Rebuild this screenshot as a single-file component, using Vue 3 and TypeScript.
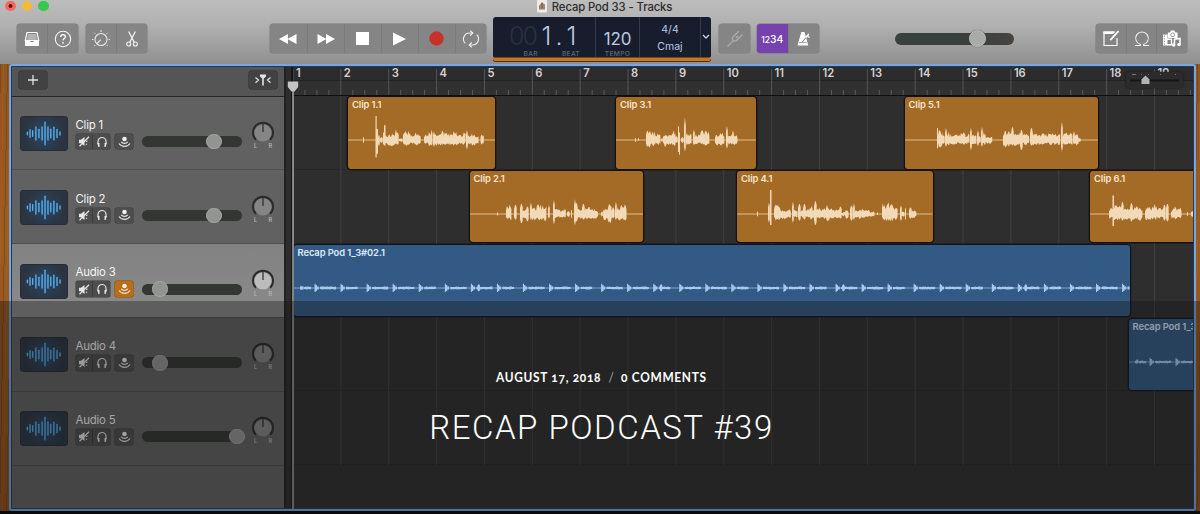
<script setup lang="ts">
interface Track {
  name: string
  volume: number
  selected: boolean
  monitoring: boolean
}

/** [from, to, height above the centre line, height below it], in px from the region's left edge */
type Burst = [number, number, number, number]

interface Region {
  name: string
  lane: number
  start: number
  length: number
  tone: 'amber' | 'blue'
  bursts: Burst[]
}

const BAR = 47.86

const tracks: Track[] = [
  { name: 'Clip 1', volume: 72, selected: false, monitoring: false },
  { name: 'Clip 2', volume: 72, selected: false, monitoring: false },
  { name: 'Audio 3', volume: 18.5, selected: true, monitoring: true },
  { name: 'Audio 4', volume: 18.5, selected: false, monitoring: false },
  { name: 'Audio 5', volume: 95, selected: false, monitoring: false },
]

const iconBars: [number, number][] = [
  [6.4, 1.4], [9.2, 4], [12, 3], [15.4, 7], [18.6, 4.4], [22, 7],
  [25.1, 12], [28.2, 7], [31.2, 4.6], [34.5, 6.6], [37.8, 4.2], [41, 1.6],
]

const bars = Array.from({ length: 19 }, (_, i) => ({ label: String(i + 1), x: i * BAR }))
const ticks = Array.from({ length: 76 }, (_, i) => i).filter((i) => i % 4 !== 0).map((i) => (i * BAR) / 4)

function musicBed(length: number): Burst[] {
  const list: Burst[] = []
  let hit = 21
  let n = 0
  list.push([6, 10, 3, 2.2], [10, 18, 1.8, 1.6])
  while (hit < length - 4) {
    list.push([hit - 0.5, hit + 0.6, 4.6, 4.2], [hit + 0.6, hit + 2, 3.4, 3.2], [hit + 2, hit + 4, 2, 2])
    if (n % 7 === 6) list.push([hit + 6, hit + 9, 4, 3.6])
    const end = Math.min(hit + (n % 3 === 1 ? 17 : 22), length - 1)
    list.push([hit + 5, end, 1.7, 1.6])
    hit += 26.05
    n += 1
  }
  return list
}

const regions: Region[] = [
  {
    name: 'Clip 1.1', lane: 0, start: 55, length: 147, tone: 'amber',
    bursts: [
      [15, 16, 3, 3], [27.5, 28.7, 26, 19], [28.5, 30, 12, 15], [30, 32, 6, 7], [32, 35, 3, 3], [35, 36, 8, 5], [36, 37.5, 16, 6],
      [37, 48, 7, 6], [47, 49, 12, 5], [48, 51, 8, 5], [51, 55, 2, 2], [55, 63, 10, 6], [62, 67, 6, 4], [66, 71, 10, 6],
      [70, 73, 5, 4], [76, 81, 7, 5], [80, 85, 11, 7], [85, 87, 10, 8], [86, 94, 7, 6], [93, 96, 10, 5], [95, 102, 8, 5],
      [101, 110, 9, 6], [108, 115, 7, 5], [114, 118, 9, 5], [118, 120, 11, 11], [119, 124, 7, 5], [123, 128, 8, 7],
      [127, 131, 5, 5], [132.5, 135, 6, 5], [134, 136.5, 5, 4],
    ],
  },
  {
    name: 'Clip 2.1', lane: 1, start: 176.5, length: 173.5, tone: 'amber',
    bursts: [
      [27, 28, 1.5, 1.5], [36, 42, 10, 7], [44, 47, 10, 6], [50, 53, 11, 10], [52, 57, 6, 5], [56, 59, 8, 8], [60, 62, 13, 7],
      [61, 67, 8, 7], [66, 72, 10, 7], [71, 77, 10, 8], [78, 80, 10, 5], [83, 85, 16, 12], [84, 88, 9, 5], [87, 95, 5, 4],
      [94, 96, 6, 4], [97, 100, 3, 3], [101, 102, 4, 4], [104, 106, 17, 13], [105, 108, 12, 8], [107, 113, 6, 5], [112, 115, 11, 6],
      [114, 121, 8, 6], [119, 128, 6, 5], [131, 133, 3, 3], [133, 138, 7, 7], [137, 142, 10, 10], [141, 145, 7, 5],
      [145, 147, 14, 7], [146, 151, 7, 6], [149, 153, 10, 8], [152, 157, 13, 8],
    ],
  },
  {
    name: 'Clip 3.1', lane: 0, start: 323, length: 140, tone: 'amber',
    bursts: [
      [19, 20, 2, 2], [22, 23, 2, 1], [30, 33, 10, 7], [32, 36, 11, 8], [35, 40, 9, 6], [39, 45, 7, 5], [45, 47, 2, 2], [47, 51, 9, 7], [50, 56, 7, 5],
      [55, 60, 10, 7], [59, 62, 4, 3], [62, 63, 15, 13], [63, 64, 8, 16], [65, 68, 3, 3], [68, 70, 26, 13], [70, 72, 8, 6], [71, 76, 7, 5],
      [77, 79, 12, 6], [78, 85, 6, 5], [84, 89, 10, 6], [88, 94, 10, 6], [99, 103, 6, 6], [102, 109, 8, 6],
      [110, 112, 16, 10], [111, 117, 6, 5], [116, 118, 11, 5], [117, 121.5, 8, 6],
    ],
  },
  {
    name: 'Clip 4.1', lane: 1, start: 444, length: 195.5, tone: 'amber',
    bursts: [
      [20, 21, 2.5, 2.5], [31, 33, 13, 10], [33, 34.5, 26, 12], [37, 42, 11, 7], [40, 44, 9, 6], [43, 54, 5, 5], [55, 57, 14, 10],
      [56, 61, 5, 4], [61, 64, 11, 7], [63, 67, 4, 4], [66, 69, 11, 6], [68, 73, 5, 4], [72, 76, 9, 6], [75, 78, 4, 4], [77, 80, 14, 12], [79, 85, 7, 5],
      [84, 90, 7, 5], [89, 93, 12, 8], [92, 98, 6, 5], [97, 103, 5, 5], [102, 105, 8, 5], [104, 109, 2, 2], [108, 112, 5, 5], [113, 116, 9, 7],
      [116, 118, 12, 7], [117, 125, 5, 5], [124, 133, 5, 4], [132, 138, 3, 3], [140, 141, 1.5, 1], [145, 149, 12, 8], [148, 153, 13, 8], [152, 158, 12, 8],
      [157, 161, 8, 6], [163, 165, 10, 8], [164, 168, 4, 3], [168, 169, 6, 6], [172, 175, 7, 5], [174, 179.5, 4, 4],
    ],
  },
  {
    name: 'Clip 5.1', lane: 0, start: 611.5, length: 193.5, tone: 'amber',
    bursts: [
      [32, 33, 13, 9], [33, 38, 11, 8], [37, 40, 5, 4], [40, 42, 14, 8], [41, 45, 9, 6], [44, 53, 6, 5], [52, 56, 6, 4], [55, 61, 9, 6],
      [60, 65, 7, 5], [65, 67, 14, 12], [66, 72, 6, 5], [72, 74, 11, 7], [73, 76, 4, 3], [76, 78, 15, 8], [77, 81, 9, 5], [80, 88, 4, 4],
      [98, 102, 10, 8], [101, 105, 11, 7], [104, 107, 7, 5], [106, 109, 14, 6], [108, 116, 8, 6], [115, 118, 11, 11], [117, 125, 7, 5],
      [125, 128, 13, 6], [127, 134, 8, 6], [132, 142, 7, 5], [140, 150, 7, 5], [148, 156, 8, 5], [156, 158, 21, 13], [157, 164, 8, 6],
      [163, 168, 8, 6], [168, 170, 10, 5], [169, 174, 7, 6], [173, 176, 2, 2],
    ],
  },
  {
    name: 'Clip 6.1', lane: 1, start: 797, length: 120, tone: 'amber',
    bursts: [
      [19, 23, 7, 6], [22.5, 24, 20, 13], [23, 29, 10, 7], [27, 32, 9, 6], [31, 34, 13, 7], [33, 41, 7, 6], [40, 43, 12, 8],
      [42, 49, 8, 6], [47, 53, 7, 7], [55, 59, 10, 7], [57, 64, 8, 6], [63, 67, 11, 7], [66, 74, 7, 5], [73, 76, 10, 7], [76, 79, 11, 8],
      [81, 85, 6, 5], [84, 88, 9, 5], [87, 92, 7, 5], [97, 98, 2, 2], [101, 104, 3, 3],
    ],
  },
  { name: 'Recap Pod 1_3#02.1', lane: 2, start: 0.5, length: 836.5, tone: 'blue', bursts: musicBed(836.5) },
  { name: 'Recap Pod 1_3#02.2', lane: 3, start: 835.5, length: 100, tone: 'blue', bursts: musicBed(100) },
]

const lanes = tracks.map((_, lane) => regions.filter((r) => r.lane === lane))

function wavePath(region: Region): string {
  const mid = 43
  let seed = region.name.length * 131 + region.lane * 17 + Math.round(region.start)
  const noise = () => {
    seed = (seed * 16807) % 2147483647
    return (seed % 1000) / 1000
  }
  return region.bursts
    .map(([from, to, up, down]) => {
      const top: string[] = []
      const bottom: string[] = []
      const span = to - from
      for (let x = from; x <= to + 0.01; x += span < 2 ? span / 2 : 0.9) {
        const edge = span < 2 ? 1 : Math.min(1, 0.55 + Math.min(x - from, to - x) * 0.45)
        const u = Math.max(1, up * edge * (span < 4 ? 0.92 : 0.42 + 0.55 * noise()))
        const d = Math.max(1, down * edge * (span < 4 ? 0.92 : 0.5 + 0.5 * noise()))
        top.push(`${x.toFixed(1)} ${(mid - u).toFixed(1)}`)
        bottom.unshift(`${x.toFixed(1)} ${(mid + d).toFixed(1)}`)
      }
      return `M${top.join('L')}L${bottom.join('L')}Z`
    })
    .join('')
}
</script>

<template>
  <div class="screen">
    <header class="chrome">
      <div class="titlebar">
        <div class="lights">
          <i class="light close"></i><i class="light minimise"></i><i class="light expand"></i>
        </div>
        <div class="doc">
          <svg width="10" height="13" viewBox="0 0 10 13"><rect width="10" height="12.500" rx="1" fill="#ececec" /><path d="M2 5.500L5 2.500l3 2V9.500H2z" fill="#a1846f" /><path d="M5 2.500v6" stroke="#6d564b" /></svg>
          <span>Recap Pod 33 - Tracks</span>
        </div>
      </div>

      <div class="toolbar">
        <div class="group library">
          <button>
            <svg width="16" height="16" viewBox="0 0 16 16"><path d="M3 1.500h10l1.700 8H1.300z" fill="none" stroke="#fff" stroke-width="1.200" /><path d="M3.800 4h8.400M3.500 6h9M3.200 8h9.600" stroke="#eee" stroke-width=".9" /><path d="M1 9.500h4.500c.4 2.300 4.600 2.300 5 0H15V15H1z" fill="#fff" /></svg>
          </button>
          <button>
            <svg width="18" height="18" viewBox="0 0 18 18"><circle cx="9" cy="9" r="7.700" fill="none" stroke="#f4f4f4" stroke-width="1.100" /><path d="M6.700 7c0-3.300 4.900-3.100 4.700-.2-.1 1.700-2.400 1.900-2.400 3.800" fill="none" stroke="#fff" stroke-width="1.300" /><circle cx="9" cy="12.800" r=".9" fill="#fff" /></svg>
          </button>
        </div>
        <div class="group editors">
          <button>
            <svg width="20" height="20" viewBox="0 0 20 20" fill="none" stroke="#e6e6e6"><circle cx="10" cy="10.500" r="6" stroke-width="1.100" /><path d="M9.800 10.700L6 14.500" stroke-width="1.200" /><path d="M10 1v2M3.300 3.800l1 1M16.700 3.800l-1 1M1 10.500h1.500M17.500 10.500H19M3.300 17l1-1M16.700 17l-1-1" stroke-width="1" /></svg>
          </button>
          <button>
            <svg width="14" height="18" viewBox="0 0 14 18" fill="none" stroke="#f4f4f4"><path d="M3.700 1.500l5.600 11M10.300 1.500L4.700 12.500" stroke-width="1.300" /><circle cx="3.700" cy="14" r="2" stroke-width="1.100" /><circle cx="10.300" cy="14" r="2" stroke-width="1.100" /></svg>
          </button>
        </div>

        <div class="group transport">
          <button><svg width="18" height="12" viewBox="0 0 18 12"><path d="M9 1v10L0 6zM17.500 1v10L8.500 6z" fill="#fff" /></svg></button>
          <button><svg width="18" height="12" viewBox="0 0 18 12"><path d="M.5 1v10l9-5zM9 1v10l9-5z" fill="#fff" /></svg></button>
          <button><svg width="13" height="13"><rect width="13" height="13" fill="#fff" /></svg></button>
          <button><svg width="13" height="14" viewBox="0 0 13 14"><path d="M0 .5v13L13 7z" fill="#fff" /></svg></button>
          <button><svg width="15" height="15"><circle cx="7.500" cy="7.500" r="7.200" fill="#c8302c" /></svg></button>
          <button>
            <svg width="20" height="18" viewBox="0 0 20 18" fill="none" stroke="#f0f0f0" stroke-width="1.100"><path d="M11.500 3H8.500A6 6 0 0 0 4.300 13.300" /><path d="M8.500 15h3A6 6 0 0 0 15.700 4.700" /><path d="M9.200.6L11.800 3 9.200 5.500M10.800 12.500L8.200 15l2.600 2.400" /></svg>
          </button>
        </div>

        <div class="lcd">
          <div class="position">
            <div class="digits"><span class="ghost">00</span><span class="bar">1</span><span class="dot">.</span><span>1</span></div>
            <div class="units"><span>BAR</span><span>BEAT</span></div>
          </div>
          <div class="tempo">
            <b>120</b>
            <small>TEMPO</small>
          </div>
          <div class="key"><span>4/4</span><span>Cmaj</span></div>
          <div class="more"><svg width="8" height="6" viewBox="0 0 8 6"><path d="M1 1l3 3 3-3" fill="none" stroke="#c6d6e8" stroke-width="1.300" /></svg></div>
        </div>

        <div class="group tuner">
          <button><svg width="18" height="18" viewBox="0 0 18 18" fill="none" stroke="#aaa" stroke-width="1.400"><path d="M1.500 16.500l6-6M6.800 6.800c-1.500 3 .8 5 3.500 3.800L16.500 4.500M7 7l5.800-5.800M10 8l2-2" /></svg></button>
        </div>
        <div class="group count">
          <button class="on"><span class="count-label"><em>12</em>34</span></button>
          <button><svg width="15" height="16" viewBox="0 0 15 16"><path d="M5.300 1h3.200l3.800 13.500H1.500z" fill="#fff" /><path d="M6.800 10.500l6-7.500" stroke="#fff" stroke-width="1.400" /><path d="M6 11.500l4-5" stroke="#888" /><path d="M3 11.500h7.800" stroke="#999" stroke-width=".8" /><path d="M10.500 4.500l3 2" stroke="#fff" stroke-width="1.300" /></svg></button>
        </div>

        <div class="master"><i></i></div>

        <div class="group panels">
          <button><svg width="18" height="17" viewBox="0 0 18 17"><path d="M12 2H2v13.500h13V8" fill="none" stroke="#fff" stroke-width="1.200" /><path d="M1.500 1.500h12v2.500h-12z" fill="#fff" /><path d="M8.300 10.200l8.200-9" stroke="#858585" stroke-width="4" /><path d="M8.300 10.200l8.200-9" stroke="#fff" stroke-width="1.800" /></svg></button>
          <button><svg width="16" height="17" viewBox="0 0 16 17"><path d="M1 15.500h5.300v-1.200A6.300 6.300 0 1 1 9.700 14.300v1.200H15" fill="none" stroke="#f2f2f2" stroke-width="1.100" /></svg></button>
          <button>
            <svg width="20" height="19" viewBox="0 0 20 19"><path d="M1 5.500h4.500v11H1z" fill="#fff" /><path d="M2.300 6.500v10" stroke="#888" stroke-dasharray="1.300 1.300" /><path d="M5 15.700h4.500v-5.500H5" fill="none" stroke="#fff" stroke-width="1.400" /><path d="M5.800 3.500h2.200L9 1.500h3.400l1 2h2.200V9H5.800z" fill="#fff" /><circle cx="10.700" cy="5.800" r="1.900" fill="none" stroke="#888" stroke-width=".9" /><path d="M12.500 16V10.200l5.500-.8V15.500" fill="none" stroke="#fff" stroke-width="1.500" /><circle cx="11.700" cy="16" r="1.700" fill="#fff" /><circle cx="17" cy="15.500" r="1.700" fill="#fff" /></svg>
          </button>
        </div>
      </div>
    </header>

    <main class="desk">
      <section class="window">
        <aside class="headers">
          <div class="headbar">
            <button class="dark"><svg width="12" height="12"><path d="M6 1v10M1 6h10" stroke="#e4e4e4" stroke-width="1.300" /></svg></button>
            <button class="dark"><svg width="18" height="12" viewBox="0 0 18 12"><path d="M1.500 3.500L4.500 6l-3 2.800M16.500 3.500L13.500 6l3 2.800" fill="none" stroke="#e4e4e4" stroke-width="1.200" /><path d="M6 .5h6v2L9.800 4.500V11.500H8.200V4.500L6 2.500z" fill="#e4e4e4" /></svg></button>
          </div>

          <div v-for="t in tracks" :key="t.name" class="track" :class="{ selected: t.selected }">
            <svg class="thumb" width="48" height="35" viewBox="0 0 48 35">
              <path v-for="[x, h] in iconBars" :key="x" :d="`M${x} ${17.500 - h}V${17.500 + h}`" stroke="#55aeee" stroke-width="1.500" stroke-linecap="round" />
            </svg>
            <div class="info">
              <div class="name">{{ t.name }}</div>
              <div class="controls">
                <div class="pair">
                  <span><svg width="12" height="11" viewBox="0 0 12 11"><path d="M1 3.700h2L6.500 1v9L3 7.300H1z" fill="#e6e6e6" /><path d="M1.500 10.200L11 .8M8 5.500l1.500-.5M8 8l1 .6" stroke="#e6e6e6" stroke-width="1.200" /></svg></span>
                  <span><svg width="12" height="12" viewBox="0 0 12 12"><path d="M2 8V5.500a4 4 0 0 1 8 0V8" fill="none" stroke="#e6e6e6" stroke-width="1.200" /><path d="M1.300 7h2.200v4H2.300zM10.700 7H8.500v4h1.200z" fill="#e6e6e6" /></svg></span>
                </div>
                <div class="monitor" :class="{ on: t.monitoring }">
                  <svg width="13" height="12" viewBox="0 0 13 12"><circle cx="6.500" cy="3" r="2.300" fill="#efefef" /><path d="M3.200 5.800c1.500 2 5.100 2 6.600 0M1 7.500c2.500 3.800 8.500 3.800 11 0" fill="none" stroke="#e6e6e6" stroke-width="1.200" /></svg>
                </div>
              </div>
            </div>
            <div class="fader"><i :style="{ left: t.volume + '%' }"></i></div>
            <svg class="pan" width="24" height="30" viewBox="0 0 24 30">
              <path d="M4.900 18.700A10 10 0 1 1 19.100 18.700" fill="none" stroke="#2b2b2b" stroke-width="2" />
              <circle class="knob" cx="12" cy="11.800" r="8.600" />
              <path d="M12 1v10" stroke="#2b2b2b" stroke-width="1.200" />
              <text x="3" y="27">L</text><text x="17.500" y="27">R</text>
            </svg>
          </div>
        </aside>

        <div class="gutter"></div>

        <div class="timeline">
          <div class="ruler">
            <svg width="901" height="30">
              <rect y="13" width="901" height="17" fill="#303030" />
              <path d="M0 13.500H901" stroke="#222" />
              <path v-for="x in ticks" :key="x" :d="`M${x} 23v5.500`" stroke="#5a5a5a" />
              <g v-for="b in bars" :key="b.label">
                <path :d="`M${b.x} 2v27`" stroke="#555" />
                <text :x="b.x + 3" y="10">{{ b.label }}</text>
              </g>
            </svg>
            <div class="zoomer">
              <svg width="58" height="17"><path d="M6 2.500h4M15 2.500h1M22 2.500h1M34 2.500h1M49 2.500h1" stroke="#777" /><path d="M4 8.500h49" stroke="#151515" stroke-width="2" /><path d="M15.500 12V7.500l4-4 4 4V12z" fill="#b3b3b3" /></svg>
            </div>
          </div>

          <div v-for="(lane, i) in lanes" :key="i" class="lane">
            <svg class="grid" width="901" height="74"><path v-for="b in bars" :key="b.label" :d="`M${b.x} 0v74`" stroke="#414141" /></svg>
            <div v-for="r in lane" :key="r.name" class="region" :class="r.tone" :style="{ left: r.start + 'px', width: r.length + 'px' }">
              <svg :width="r.length" height="72"><path :d="`M0 43H${r.length}`" class="axis" /><path :d="wavePath(r)" class="wave" /></svg>
              <span>{{ r.name }}</span>
            </div>
          </div>
        </div>

        <svg class="playhead" width="12" height="428" viewBox="0 0 12 428"><path d="M6 8v420" stroke="#a9a9a9" stroke-width="1.500" /><path d="M.8.500h10.400V6L7.500 10.500h-3L.8 6z" fill="#c4c4c4" /></svg>
      </section>
    </main>

    <div class="veil"></div>
    <article class="caption">
      <p><span>AUGUST 17, 2018</span><i>/</i><span>0 COMMENTS</span></p>
      <h1>RECAP PODCAST #39</h1>
    </article>
  </div>
</template>

<style>
html, body { background: #000; overflow: hidden; }
</style>

<style scoped>
* { box-sizing: border-box; }
.screen {
  position: relative; width: 1200px; height: 514px; overflow: hidden;
  display: flex; flex-direction: column; background: #050505;
  font-family: Inter, "Liberation Sans", sans-serif;
}
button { border: 0; padding: 0; margin: 0; font: inherit; display: flex; align-items: center; justify-content: center; background: none; }
svg { display: block; flex: none; }

.chrome { height: 64px; flex: none; background: linear-gradient(#bdbdbd, #b0b0b0 40%, #909090); }
.titlebar { height: 17px; display: flex; }
.lights { display: flex; gap: 6px; padding: 0 0 0 5px; margin-top: .5px; }
.light { width: 10.600px; height: 10.600px; border-radius: 50%; }
.close { background: radial-gradient(circle, #6b0f0c 0 1.500px, #ee6a63 2.400px); }
.minimise { background: #f6b93c; }
.expand { background: #35c84a; }
.doc { display: flex; align-items: center; gap: 5px; margin-left: 488px; height: 13px; font-size: 11.300px; color: #2c2c2c; white-space: nowrap; font-weight: 450; letter-spacing: -.1px; }

.toolbar { display: flex; align-items: flex-start; padding: 0 0 0 17px; height: 47px; }
.group { display: flex; height: 29px; margin-top: 7px; border-radius: 3px; background: #858585; box-shadow: 0 0 0 .5px #7b7b7b; overflow: hidden; }
.group button { flex: 1 1 0; }
.group button + button { border-left: 1px solid #7b7b7b; }
.library { width: 61px; }
.editors { width: 61px; margin-left: 8px; }
.transport { width: 215.500px; margin-left: 123px; display: grid; grid-template-columns: 36.500px repeat(4, 37px) 1fr; }
.tuner { width: 31px; margin-left: 8px; }
.count { width: 62px; margin-left: 7px; }
.count .on { background: #7542ae; }
.count-label { color: #fff; font-size: 10.300px; font-weight: 500; display: flex; align-items: baseline; }
.count-label em { font-style: normal; font-size: 8.500px; }
.panels { width: 91px; margin-left: 82px; }
.master { width: 119.500px; height: 12px; border-radius: 6px; margin: 15.500px 0 0 75.500px; background: linear-gradient(90deg, #3a403e 60%, #47433f); display: flex; justify-content: flex-end; align-items: center; padding-right: 28.500px; }
.master i { flex: none; width: 17px; height: 17px; border-radius: 50%; background: #a9aba8; border: 1px solid #bcbcbc; box-shadow: 0 0 1px #444; }

.lcd { width: 218px; height: 44.500px; margin-left: 7.500px; background: #181d2e; border-radius: 3px; border-bottom: 1px solid #4a3420; box-shadow: inset 0 -3.500px 0 #c47722; display: flex; color: #b9cbe2; }
.lcd > div { display: flex; flex-direction: column; align-items: center; }
.lcd > div + div { border-left: 1px solid #333a4a; height: 40px; }
.lcd .position { width: 102px; align-items: flex-start; padding-left: 16px; }
.digits { font-size: 25px; font-weight: 300; line-height: 26px; margin-top: 6px; height: 26px; display: flex; }
.ghost { color: #2b3041; letter-spacing: -2px; width: 32.500px; }
.bar { width: 14px; }
.dot { width: 11px; }
.units { display: flex; gap: 24px; padding-left: 14.500px; margin-top: .500px; }
.units span, .tempo small { font-size: 6.700px; line-height: 8px; color: #5b677a; letter-spacing: .3px; font-weight: 500; }
.tempo { width: 44px; }
.tempo b { font-size: 17px; font-weight: 400; line-height: 20px; margin-top: 12px; letter-spacing: -.2px; }
.tempo small { margin-top: .500px; }
.key { width: 61px; font-size: 10.500px; line-height: 17px; padding-top: 4px; }
.more { width: 11px; justify-content: center; }

.desk {
  height: 447px; padding: 0 4px 0 9px; flex: none;
  background: repeating-linear-gradient(91deg, rgba(60, 25, 0, .22) 0 1px, transparent 1px 3px, rgba(255, 160, 60, .08) 3px 4px, transparent 4px 7px), linear-gradient(#93551f, #9b5a20 40%, #8f4f1a);
}
.window { position: relative; height: 447px; border: 2px solid #7ba6d8; border-radius: 3px; display: flex; padding: 1px; background: #1c3c66; }
.headers { width: 272px; background: #616161; flex: none; overflow: hidden; }
.headbar { height: 29.700px; padding: 0 7px 3px; display: flex; justify-content: space-between; align-items: center; background: #555; border-bottom: 1.500px solid #262626; }
.dark { width: 28px; height: 18px; background: #424242; border-radius: 2.500px; box-shadow: 0 0 0 .5px #2f2f2f; }
.track { height: 73.800px; border-bottom: 1px solid #4f4f4f; display: flex; align-items: center; padding: 1px 0 0 8px; }
.track.selected { background: linear-gradient(#828282, #8a8a8a); }
.thumb { background: radial-gradient(circle, #2b4663, #2b3440 75%); border-radius: 3px; border: 1px solid #252d38; }
.info { width: 66px; margin-left: 7.500px; margin-top: -1px; }
.name { font-size: 11.400px; line-height: 15px; color: #f4f4f4; margin: 1px 0 1px 0; white-space: nowrap; letter-spacing: -.2px; }
.controls { display: flex; gap: 5px; }
.pair { display: flex; width: 34.500px; height: 15.500px; border-radius: 2px; background: #4d4d4d; box-shadow: 0 0 0 .5px #3c3c3c; }
.pair span { flex: 1 1 0; display: flex; align-items: center; justify-content: center; }
.pair span + span { border-left: 1px solid #3c3c3c; }
.monitor { width: 18px; height: 15.500px; border-radius: 2px; background: #4d4d4d; box-shadow: 0 0 0 .5px #3c3c3c; display: flex; align-items: center; justify-content: center; }
.monitor.on { background: #bd6c12; box-shadow: 0 0 0 .5px #8a4d0c; }
.fader { position: relative; width: 100.500px; height: 11px; border-radius: 6px; background: #333633; margin-top: 16px; }
.fader i { position: absolute; top: -2.200px; width: 15.400px; height: 15.400px; margin-left: -7.700px; border-radius: 50%; background: #929492; border: 1px solid #a9a9a9; }
.pan { margin: 5px 0 0 9px; }
.pan text { font-size: 5.500px; font-weight: 600; fill: #b5b5b5; }
.knob { fill: #858585; }
.selected .knob { fill: #bcbcbc; }

.gutter { width: 9px; flex: none; background: linear-gradient(90deg, #222 2px, #2d2d2d 2px 7px, #161616 7px); }
.timeline { flex: 1; min-width: 0; background: #2e2e2e; overflow: hidden; }
.ruler { position: relative; height: 29.200px; background: #2c2c2c; border-bottom: 1px solid #101010; overflow: hidden; }
.ruler text { font-size: 11.200px; font-weight: 600; fill: #d4d4d4; }
.zoomer { position: absolute; right: 10px; top: 5px; width: 57px; height: 16px; background: #2b2b2b; border-radius: 3px; box-shadow: 0 0 2px #151515; }
.lane { position: relative; height: 73.800px; border-bottom: 1px solid #272727; }
.region { position: absolute; top: 1px; height: 71.500px; border-radius: 3px; box-shadow: 0 0 0 1.300px #15110c; overflow: hidden; }
.region svg { position: absolute; inset: 0; }
.region span { position: relative; display: block; padding: 2px 0 0 4px; font-size: 9.400px; line-height: 12px; font-weight: 600; letter-spacing: -.1px; color: #f8e6cf; white-space: nowrap; }
.amber { background: #a36b26; }
.amber .wave { fill: #f2d9b8; }
.amber .axis { stroke: #e3bd8b; }
.blue { background: #335a84; box-shadow: 0 0 0 1.300px #10151c; }
.blue span { color: #dfeafa; letter-spacing: -.08px; }
.blue .wave { fill: #a9c8ec; }
.blue .axis { stroke: #7fa6d3; }
.playhead { position: absolute; left: 276px; top: 15px; }

.veil { position: absolute; left: 0; right: 0; top: 301px; bottom: 0; background: rgba(20, 20, 20, .36); }
.caption { position: absolute; left: 0; right: 0; top: 368px; text-align: center; color: #fff; }
.caption p { margin: 0; font: 700 13.200px/18px Lato, "Open Sans", sans-serif; font-variant-numeric: oldstyle-nums; letter-spacing: .8px; display: flex; justify-content: center; padding-left: 3px; transform: scaleX(.9); }
.caption i { font-style: normal; font-weight: 400; color: #aaa; margin: 0 8px; letter-spacing: 0; }
.caption h1 { margin: 20px 0 0; font: 300 33px/44px "Roboto Slab", Roboto, sans-serif; letter-spacing: 1.500px; white-space: nowrap; padding-left: 3px; }
</style>
